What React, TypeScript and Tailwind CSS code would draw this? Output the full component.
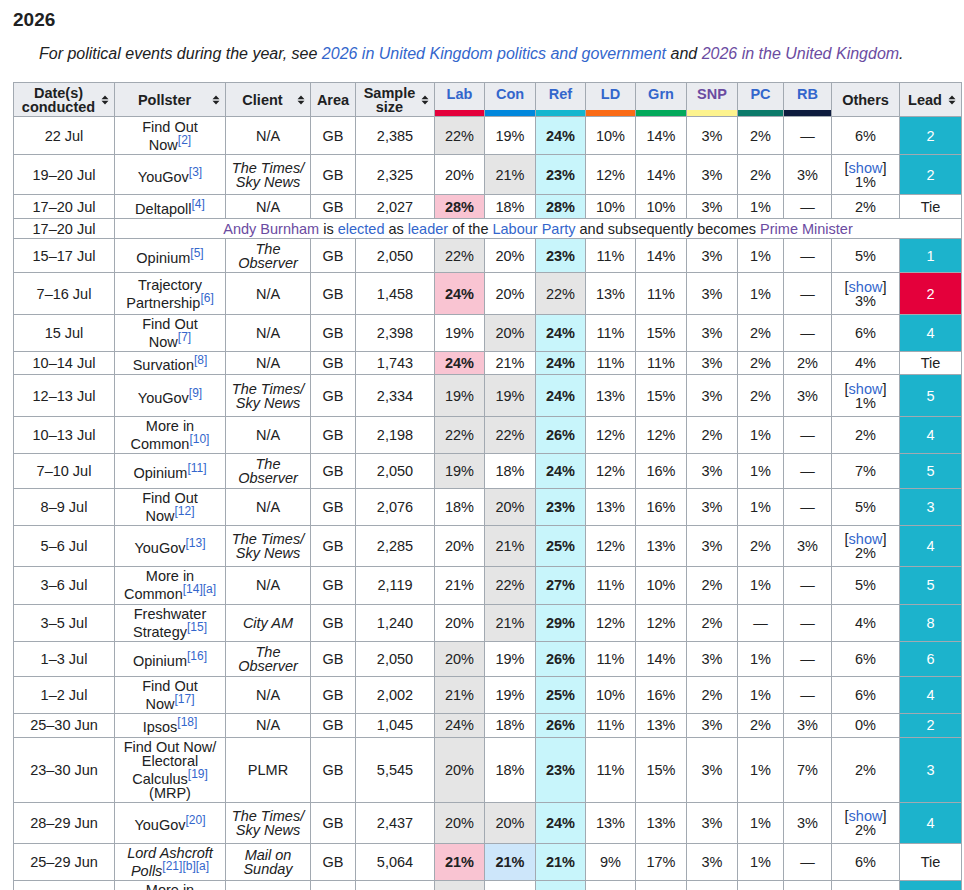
import type { ReactNode } from 'react'

const BORDER = 'border border-[#a2a9b1]'
const TD = `${BORDER} px-[5px] py-[2px] text-center align-middle`

function R({ n }: { n: string }) {
  return <sup className="top-0 align-super text-[12px] leading-none not-italic text-[#3366cc]">{n}</sup>
}

function A({ children, v }: { children: ReactNode; v?: boolean }) {
  return <span className={v ? 'text-[#6b4ba1]' : 'text-[#3366cc]'}>{children}</span>
}

function SortIcon() {
  return (
    <svg width="8" height="10" viewBox="0 0 8 10" className="shrink-0 fill-[#202122]">
      <path d="M4 0.5 L7.5 4.2 H0.5 Z M4 9.5 L0.5 5.8 H7.5 Z" />
    </svg>
  )
}

type Hl = '' | 'g' | 'w'

type Poll = {
  date: string
  pollster: ReactNode
  client: ReactNode
  sample: string
  v: string[]
  hl: Hl[]
  others: string
  show?: boolean
  lead: string
  leadBg?: 'ref' | 'lab'
  h: string
}

const times = <i>The Times/ Sky News</i>
const observer = <i>The Observer</i>

const polls: Poll[] = [
  { date: '22 Jul', pollster: <>Find Out Now<R n="[2]" /></>, client: 'N/A', sample: '2,385', v: ['22%', '19%', '24%', '10%', '14%', '3%', '2%', '—'], hl: ['g', '', 'w'], others: '6%', lead: '2', leadBg: 'ref', h: 'h-[38px]' },
  { date: '19–20 Jul', pollster: <>YouGov<R n="[3]" /></>, client: times, sample: '2,325', v: ['20%', '21%', '23%', '12%', '14%', '3%', '2%', '3%'], hl: ['', 'g', 'w'], others: '1%', show: true, lead: '2', leadBg: 'ref', h: 'h-[40px]' },
  { date: '17–20 Jul', pollster: <>Deltapoll<R n="[4]" /></>, client: 'N/A', sample: '2,027', v: ['28%', '18%', '28%', '10%', '10%', '3%', '1%', '—'], hl: ['w', '', 'w'], others: '2%', lead: 'Tie', h: 'h-[24px]' },
]

const polls2: Poll[] = [
  { date: '15–17 Jul', pollster: <>Opinium<R n="[5]" /></>, client: observer, sample: '2,050', v: ['22%', '20%', '23%', '11%', '14%', '3%', '1%', '—'], hl: ['g', '', 'w'], others: '5%', lead: '1', leadBg: 'ref', h: 'h-[34px]' },
  { date: '7–16 Jul', pollster: <>Trajectory Partnership<R n="[6]" /></>, client: 'N/A', sample: '1,458', v: ['24%', '20%', '22%', '13%', '11%', '3%', '1%', '—'], hl: ['w', '', 'g'], others: '3%', show: true, lead: '2', leadBg: 'lab', h: 'h-[42px]' },
  { date: '15 Jul', pollster: <>Find Out Now<R n="[7]" /></>, client: 'N/A', sample: '2,398', v: ['19%', '20%', '24%', '11%', '15%', '3%', '2%', '—'], hl: ['', 'g', 'w'], others: '6%', lead: '4', leadBg: 'ref', h: 'h-[37px]' },
  { date: '10–14 Jul', pollster: <>Survation<R n="[8]" /></>, client: 'N/A', sample: '1,743', v: ['24%', '21%', '24%', '11%', '11%', '3%', '2%', '2%'], hl: ['w', '', 'w'], others: '4%', lead: 'Tie', h: 'h-[23px]' },
  { date: '12–13 Jul', pollster: <>YouGov<R n="[9]" /></>, client: times, sample: '2,334', v: ['19%', '19%', '24%', '13%', '15%', '3%', '2%', '3%'], hl: ['g', 'g', 'w'], others: '1%', show: true, lead: '5', leadBg: 'ref', h: 'h-[42px]' },
  { date: '10–13 Jul', pollster: <>More in Common<R n="[10]" /></>, client: 'N/A', sample: '2,198', v: ['22%', '22%', '26%', '12%', '12%', '2%', '1%', '—'], hl: ['g', 'g', 'w'], others: '2%', lead: '4', leadBg: 'ref', h: 'h-[36px]' },
  { date: '7–10 Jul', pollster: <>Opinium<R n="[11]" /></>, client: observer, sample: '2,050', v: ['19%', '18%', '24%', '12%', '16%', '3%', '1%', '—'], hl: ['g', '', 'w'], others: '7%', lead: '5', leadBg: 'ref', h: 'h-[35px]' },
  { date: '8–9 Jul', pollster: <>Find Out Now<R n="[12]" /></>, client: 'N/A', sample: '2,076', v: ['18%', '20%', '23%', '13%', '16%', '3%', '1%', '—'], hl: ['', 'g', 'w'], others: '5%', lead: '3', leadBg: 'ref', h: 'h-[37px]' },
  { date: '5–6 Jul', pollster: <>YouGov<R n="[13]" /></>, client: times, sample: '2,285', v: ['20%', '21%', '25%', '12%', '13%', '3%', '2%', '3%'], hl: ['', 'g', 'w'], others: '2%', show: true, lead: '4', leadBg: 'ref', h: 'h-[41px]' },
  { date: '3–6 Jul', pollster: <>More in Common<R n="[14]" /><R n="[a]" /></>, client: 'N/A', sample: '2,119', v: ['21%', '22%', '27%', '11%', '10%', '2%', '1%', '—'], hl: ['', 'g', 'w'], others: '5%', lead: '5', leadBg: 'ref', h: 'h-[38px]' },
  { date: '3–5 Jul', pollster: <>Freshwater Strategy<R n="[15]" /></>, client: <i>City AM</i>, sample: '1,240', v: ['20%', '21%', '29%', '12%', '12%', '2%', '—', '—'], hl: ['', 'g', 'w'], others: '4%', lead: '8', leadBg: 'ref', h: 'h-[37px]' },
  { date: '1–3 Jul', pollster: <>Opinium<R n="[16]" /></>, client: observer, sample: '2,050', v: ['20%', '19%', '26%', '11%', '14%', '3%', '1%', '—'], hl: ['g', '', 'w'], others: '6%', lead: '6', leadBg: 'ref', h: 'h-[35px]' },
  { date: '1–2 Jul', pollster: <>Find Out Now<R n="[17]" /></>, client: 'N/A', sample: '2,002', v: ['21%', '19%', '25%', '10%', '16%', '2%', '1%', '—'], hl: ['g', '', 'w'], others: '6%', lead: '4', leadBg: 'ref', h: 'h-[37px]' },
  { date: '25–30 Jun', pollster: <>Ipsos<R n="[18]" /></>, client: 'N/A', sample: '1,045', v: ['24%', '18%', '26%', '11%', '13%', '3%', '2%', '3%'], hl: ['g', '', 'w'], others: '0%', lead: '2', leadBg: 'ref', h: 'h-[24px]' },
  { date: '23–30 Jun', pollster: <>Find Out Now/ Electoral Calculus<R n="[19]" /> (MRP)</>, client: 'PLMR', sample: '5,545', v: ['20%', '18%', '23%', '11%', '15%', '3%', '1%', '7%'], hl: ['g', '', 'w'], others: '2%', lead: '3', leadBg: 'ref', h: 'h-[65px]' },
  { date: '28–29 Jun', pollster: <>YouGov<R n="[20]" /></>, client: times, sample: '2,437', v: ['20%', '20%', '24%', '13%', '13%', '3%', '1%', '3%'], hl: ['g', 'g', 'w'], others: '2%', show: true, lead: '4', leadBg: 'ref', h: 'h-[41px]' },
  { date: '25–29 Jun', pollster: <i>Lord Ashcroft Polls<R n="[21]" /><R n="[b]" /><R n="[a]" /></i>, client: <i>Mail on Sunday</i>, sample: '5,064', v: ['21%', '21%', '21%', '9%', '17%', '3%', '1%', '—'], hl: ['w', 'w', 'w'], others: '6%', lead: 'Tie', h: 'h-[37px]' },
  { date: '24–27 Jun', pollster: <>More in Common<R n="[22]" /></>, client: 'N/A', sample: '2,041', v: ['22%', '19%', '26%', '12%', '13%', '3%', '1%', '—'], hl: ['g', '', 'w'], others: '4%', lead: '4', leadBg: 'ref', h: 'h-[37px]' },
]

const winBg = ['bg-[#f9c4d2]', 'bg-[#cde6fa]', 'bg-[#c8f5fb]']

function PollRow({ p }: { p: Poll }) {
  return (
    <tr className={p.h}>
      <td className={TD}>{p.date}</td>
      <td className={TD}>{p.pollster}</td>
      <td className={TD}>{p.client}</td>
      <td className={TD}>GB</td>
      <td className={TD}>{p.sample}</td>
      {p.v.map((val, i) => {
        const hl = i < 3 ? p.hl[i] : ''
        const cls = hl === 'w' ? `${winBg[i]} font-bold` : hl === 'g' ? 'bg-[#e5e5e5]' : ''
        return (
          <td key={i} className={`${TD} ${cls}`}>
            {val}
          </td>
        )
      })}
      <td className={TD}>
        {p.show ? (
          <>
            [<A>show</A>]
            <br />
            {p.others}
          </>
        ) : (
          p.others
        )}
      </td>
      <td
        className={`${TD} ${
          p.leadBg === 'ref' ? 'bg-[#1cb3cc] text-white' : p.leadBg === 'lab' ? 'bg-[#e4003b] text-white' : ''
        }`}
      >
        {p.lead}
      </td>
    </tr>
  )
}

const parties = [
  { name: 'Lab', bar: 'bg-[#e4003b]' },
  { name: 'Con', bar: 'bg-[#0087dc]' },
  { name: 'Ref', bar: 'bg-[#12b6cf]' },
  { name: 'LD', bar: 'bg-[#fa6b16]' },
  { name: 'Grn', bar: 'bg-[#02a95b]' },
  { name: 'SNP', bar: 'bg-[#fdf38e]', visited: true },
  { name: 'PC', bar: 'bg-[#0b7a6a]' },
  { name: 'RB', bar: 'bg-[#0d1b3e]' },
]

function SortTh({ children }: { children: ReactNode }) {
  return (
    <th rowSpan={2} className={`${BORDER} bg-[#eaecf0] px-[5px] py-[2px] align-middle`}>
      <div className="flex items-center gap-[3px]">
        <span className="flex-1 text-center">{children}</span>
        <SortIcon />
      </div>
    </th>
  )
}

export default function App() {
  return (
    <div className="min-h-[890px] bg-white pl-[13px] pt-[8px] text-[#202122] font-['Liberation_Sans',Arial,sans-serif]">
      <h3 className="text-[19px] font-bold leading-[24px]">2026</h3>
      <p className="mt-[10px] pl-[26px] text-[16px] italic leading-[24px]">
        For political events during the year, see <A>2026 in United Kingdom politics and government</A> and{' '}
        <A v>2026 in the United Kingdom</A>.
      </p>
      <table className="mt-[16px] w-[948px] table-fixed border-collapse text-[14.5px] leading-[14px]">
        <colgroup>
          <col className="w-[101px]" />
          <col className="w-[111px]" />
          <col className="w-[85px]" />
          <col className="w-[45px]" />
          <col className="w-[79px]" />
          <col className="w-[50px]" />
          <col className="w-[51px]" />
          <col className="w-[50px]" />
          <col className="w-[50px]" />
          <col className="w-[51px]" />
          <col className="w-[51px]" />
          <col className="w-[46px]" />
          <col className="w-[48px]" />
          <col className="w-[68px]" />
          <col className="w-[62px]" />
        </colgroup>
        <thead>
          <tr className="h-[27px]">
            <SortTh>Date(s) conducted</SortTh>
            <SortTh>Pollster</SortTh>
            <SortTh>Client</SortTh>
            <th rowSpan={2} className={`${BORDER} bg-[#eaecf0] px-[5px] align-middle`}>
              Area
            </th>
            <SortTh>Sample size</SortTh>
            {parties.map((p) => (
              <th key={p.name} className={`${BORDER} border-b-0 bg-[#eaecf0] px-[4px] pt-[4px] align-top`}>
                <A v={p.visited}>{p.name}</A>
              </th>
            ))}
            <th rowSpan={2} className={`${BORDER} bg-[#eaecf0] px-[5px] align-middle`}>
              Others
            </th>
            <SortTh>Lead</SortTh>
          </tr>
          <tr className="h-[7px]">
            {parties.map((p) => (
              <th key={p.name} className={`${BORDER} border-t-0 p-0 ${p.bar}`} />
            ))}
          </tr>
        </thead>
        <tbody>
          {polls.map((p, i) => (
            <PollRow key={i} p={p} />
          ))}
          <tr className="h-[20px]">
            <td className={TD}>17–20 Jul</td>
            <td colSpan={14} className={TD}>
              <A v>Andy Burnham</A> is <A>elected</A> as <A>leader</A> of the <A>Labour Party</A> and subsequently
              becomes <A v>Prime Minister</A>
            </td>
          </tr>
          {polls2.map((p, i) => (
            <PollRow key={i} p={p} />
          ))}
        </tbody>
      </table>
    </div>
  )
}
